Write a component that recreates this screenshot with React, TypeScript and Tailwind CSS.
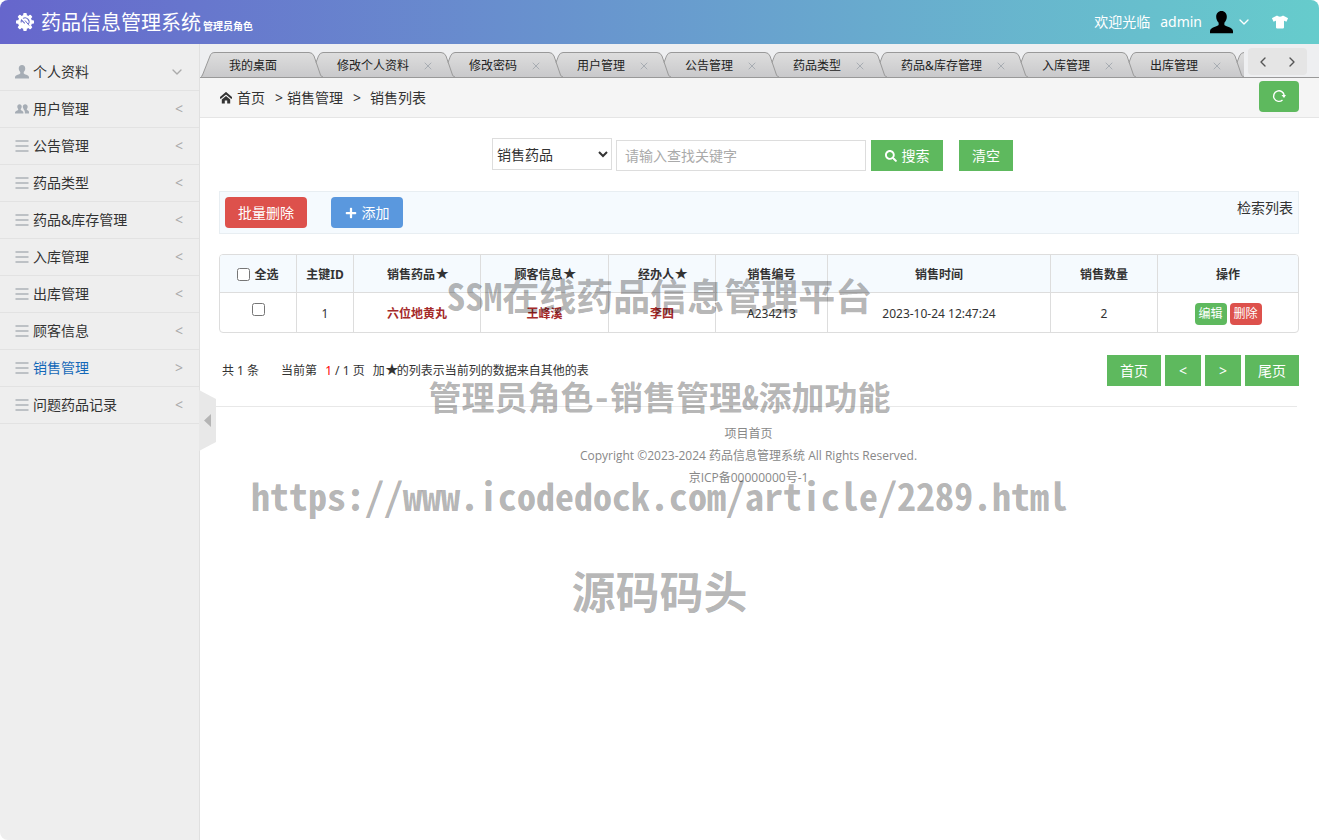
import React from "react";
import { ChevronDown, ChevronLeft, ChevronRight, X } from "lucide-react";
import { FaSearch, FaPlus, FaTshirt } from "react-icons/fa";

type MenuItem = { label: string; icon: "user" | "users" | "list"; state?: "open" | "active" };

const menu: MenuItem[] = [
  { label: "个人资料", icon: "user", state: "open" },
  { label: "用户管理", icon: "users" },
  { label: "公告管理", icon: "list" },
  { label: "药品类型", icon: "list" },
  { label: "药品&库存管理", icon: "list" },
  { label: "入库管理", icon: "list" },
  { label: "出库管理", icon: "list" },
  { label: "顾客信息", icon: "list" },
  { label: "销售管理", icon: "list", state: "active" },
  { label: "问题药品记录", icon: "list" },
];

const tabs = ["我的桌面", "修改个人资料", "修改密码", "用户管理", "公告管理", "药品类型", "药品&库存管理", "入库管理", "出库管理"];

const columns = [
  { label: "主键ID", width: "w-[57px]" },
  { label: "销售药品", width: "w-[127px]", star: true },
  { label: "顾客信息", width: "w-[128px]", star: true },
  { label: "经办人", width: "w-[107px]", star: true },
  { label: "销售编号", width: "w-[112px]" },
  { label: "销售时间", width: "" },
  { label: "销售数量", width: "w-[107px]" },
  { label: "操作", width: "w-[140px]" },
];

const USER_PATH =
  "M8 0C5.700 0 4.300 1.700 4.300 4c0 1.600.700 3.100 1.700 4.100v1.700c-.500.600-1.600.900-3 1.400C1.300 11.800 0 12.700 0 14v1.500h16V14c0-1.300-1.300-2.200-3-2.800-1.400-.500-2.500-.800-3-1.400V8.100c1-1 1.700-2.500 1.700-4.100C11.700 1.700 10.300 0 8 0Z";

function MenuIcon({ kind }: { kind: MenuItem["icon"] }) {
  if (kind === "user") {
    return (
      <svg className="size-3.5 shrink-0 fill-[#a6adb5]" viewBox="0 0 16 16">
        <path d={USER_PATH} />
      </svg>
    );
  }
  if (kind === "users") {
    return (
      <svg className="size-3.5 shrink-0 fill-[#a6adb5]" viewBox="0 0 16 16">
        <path d="M5.200 2.500C3.600 2.500 2.600 3.700 2.600 5.300c0 1 .400 2 1 2.700v1C2.300 9.800 0 10.300 0 12v1.200h9.600V12c0-1.700-1.800-2.200-3-3V8c.600-.700 1.100-1.700 1.100-2.700C7.700 3.700 6.700 2.500 5.200 2.500Z" />
        <path d="M11.600 2.500c-1.600 0-2.700 1.200-2.700 2.800 0 1 .400 2 1 2.700v.700c.900.700 1.400 1.700 1.400 3.300v1.200H16V11.500c0-1.500-1.400-1.900-2.500-2.600V8c.600-.700 1-1.700 1-2.700 0-1.600-1.300-2.800-2.900-2.800Z" />
      </svg>
    );
  }
  return (
    <svg className="size-3.5 shrink-0" viewBox="0 0 14 14" stroke="#adb3b8" strokeWidth="1.500">
      <path d="M.500 2h13M.500 7h13M.500 12h13" />
    </svg>
  );
}

function GearIcon() {
  return (
    <svg className="size-[18px]" viewBox="0 0 18 18">
      <g fill="#fff">
        <circle cx="9" cy="9" r="7" />
        {[0, 45, 90, 135, 180, 225, 270, 315].map((a) => (
          <rect key={a} x="7.200" y="0" width="3.600" height="4" rx="1" transform={`rotate(${a} 9 9)`} />
        ))}
      </g>
      <path d="M5.200 9.500a4 4 0 0 1 .300-2.500l3.300 3.300M7 5.400a4 4 0 0 1 5.400 5.600" fill="none" stroke="#6a6ecb" strokeWidth="1.100" />
      <path d="m9 7.500 4.200 5" stroke="#6a6ecb" strokeWidth="1" />
    </svg>
  );
}

function TabStart() {
  return (
    <svg className="h-[25px] w-3.5 shrink-0" viewBox="0 0 14 25">
      <path d="M0 0H14V.500C11 .500 10 1.500 9 4L1.500 23Q1 24.500 0 25Z" fill="#eeeff1" />
      <path d="M14 .500C11 .500 10 1.500 9 4L1.500 23Q1 24.500 0 24.500" fill="none" stroke="#999" />
    </svg>
  );
}

function TabJoin() {
  return (
    <svg className="h-[25px] w-3.5 shrink-0" viewBox="0 0 14 25">
      <path d="M0 0H14V.500Q11 .500 10 4L7 10 5 4Q3.500 .500 0 .500Z" fill="#eeeff1" />
      <path d="M0 .500Q3.500 .500 5 4L11.500 23Q12 24.500 14 25M7 10.500 9.500 4Q11 .500 14 .500" fill="none" stroke="#999" />
    </svg>
  );
}

function Star() {
  return <span className="inline-block w-3 text-center font-['DejaVu_Sans'] text-base leading-3">★</span>;
}

function Header() {
  return (
    <header className="flex h-11 items-center bg-linear-to-r from-[#6666cc] to-[#66cccc] pr-[31px] pl-4 text-white">
      <GearIcon />
      <h1 className="mt-0.5 ml-[7px] text-[20px] leading-7">药品信息管理系统</h1>
      <span className="mt-2 ml-0.5 text-[10px] leading-4 font-bold">管理员角色</span>
      <div className="ml-auto flex items-center text-sm">
        <span>欢迎光临</span>
        <button className="ml-2.5 flex items-center">
          admin
          <svg className="ml-2 size-[23px] fill-black" viewBox="0 0 16 16">
            <path d={USER_PATH} />
          </svg>
          <ChevronDown className="ml-[3px] size-4" />
        </button>
        <button aria-label="换肤" className="ml-5">
          <FaTshirt className="size-4" />
        </button>
      </div>
    </header>
  );
}

function Sidebar() {
  return (
    <nav className="relative w-[200px] shrink-0 border-r border-[#e0e0e0] bg-[#eee] pt-2.5">
      <ul>
        {menu.map((m) => (
          <li key={m.label} className="border-b border-[#e2e2e2]">
            <a href="#" className={`flex h-9 items-center gap-1 pr-4 pl-[15px] text-sm ${m.state === "active" ? "text-[#1468b8]" : "text-[#333]"}`}>
              <MenuIcon kind={m.icon} />
              <span>{m.label}</span>
              {m.state === "open" ? (
                <ChevronDown className="ml-auto size-4 -mr-0.5 text-[#aaa]" strokeWidth={2} />
              ) : (
                <span className="ml-auto text-[#aaa]">{m.state === "active" ? ">" : "<"}</span>
              )}
            </a>
          </li>
        ))}
      </ul>
      <button aria-label="收起菜单" className="absolute top-[346px] left-full z-10 h-[61px] w-[17px]">
        <svg className="h-full w-full" viewBox="0 0 17 61">
          <path d="M0 0 17 9V52L0 61Z" fill="#e8e8e8" />
          <path d="M12 24V37L5 30.500Z" fill="#b5b5b5" />
        </svg>
      </button>
    </nav>
  );
}

function TabBar() {
  return (
    <div className="flex h-[34px] border-b border-[#999] bg-[#eeeff1] pt-2">
      <ul className="flex min-w-0 flex-1 overflow-hidden pl-px">
        {tabs.map((t, i) => (
          <li key={t} className="flex shrink-0 bg-linear-to-b from-[#dedede] to-[#c9c9cb]">
            {i === 0 && <TabStart />}
            <div className="flex items-center border-t border-[#999] pt-px pl-3.5">
              <a href="#" className="text-xs text-[#222]">{t}</a>
              <span className="flex w-8 justify-center pl-1.5">
                {i > 0 && <X className="size-3 text-[#a8adb3]" strokeWidth={2} />}
              </span>
            </div>
            <TabJoin />
          </li>
        ))}
      </ul>
      <div className="-mt-1 mr-3 ml-1 flex h-[27px] w-[59px] shrink-0 items-center justify-around rounded bg-[#e5e5e5] text-[#555]">
        <button aria-label="向左"><ChevronLeft className="size-4" /></button>
        <button aria-label="向右"><ChevronRight className="size-4" /></button>
      </div>
    </div>
  );
}

function Breadcrumb() {
  return (
    <div className="flex h-10 items-center border-b border-[#e5e5e5] bg-[#f5f5f5] pr-5 pl-5 text-sm">
      <svg className="mr-1 size-3" viewBox="0 0 12 12">
        <path d="M0 6.300 6 1.200 12 6.300" fill="none" stroke="#333" strokeWidth="2" />
        <path d="M1.800 7.500 6 4 10.200 7.500V11.500H7.200V8.500H4.800V11.500H1.800Z" fill="#333" />
      </svg>
      <a href="#" className="mr-2.5 ml-px">首页</a>
      <span className="mr-1">&gt;</span>
      <span>销售管理</span>
      <span className="mr-[9px] ml-2.5">&gt;</span>
      <span>销售列表</span>
      <button aria-label="刷新" className="-mt-[3px] ml-auto flex h-[31px] w-10 items-center justify-center rounded bg-[#5eb95e]">
        <svg className="size-3.5" viewBox="0 0 14 14">
          <path d="M10.500 11A5.300 5.300 0 1 1 12.200 6.500" fill="none" stroke="#fff" strokeWidth="1.400" />
          <path d="M9.500 6H14L12 9Z" fill="#fff" />
        </svg>
      </button>
    </div>
  );
}

function SearchForm() {
  return (
    <form className="flex items-start justify-center pr-[13px] text-sm" onSubmit={(e) => e.preventDefault()}>
      <select aria-label="查找字段" className="-mt-0.5 h-8 w-[120px] border border-[#ddd] bg-white">
        <option>销售药品</option>
      </select>
      <input aria-label="查找关键字" placeholder="请输入查找关键字" className="ml-1 h-[31px] w-[250px] border border-[#ddd] px-2 placeholder:text-[#aaa]" />
      <button className="ml-[5px] flex h-[31px] w-[72px] items-center justify-center gap-[5px] bg-[#5eb95e] text-white">
        <FaSearch className="size-3" />
        搜索
      </button>
      <button className="ml-4 h-[31px] w-[54px] bg-[#5eb95e] text-white">清空</button>
    </form>
  );
}

function Toolbar() {
  return (
    <div className="mt-5 flex h-[43px] border border-[#e8eef2] bg-[#f5fafe] p-[5px] text-sm">
      <button className="h-[31px] w-[82px] rounded bg-[#dd514c] text-white">批量删除</button>
      <button className="ml-6 flex h-[31px] w-[72px] items-center justify-center gap-[5px] rounded bg-[#5a98de] text-white">
        <FaPlus className="size-3" />
        添加
      </button>
      <span className="ml-auto leading-[22px]">检索列表</span>
    </div>
  );
}

function SalesTable() {
  return (
    <div className="mt-5 overflow-hidden rounded border border-[#ddd]">
      <table className="w-full table-fixed border-separate border-spacing-0 text-center text-xs">
        <thead>
          <tr className="h-[38px] bg-[#f5fafe]">
            <th className="w-[77px] border-r border-b border-[#ddd] pt-0.5">
              <label className="flex items-center justify-center gap-1">
                <input type="checkbox" className="size-[13px]" />
                全选
              </label>
            </th>
            {columns.map((c) => (
              <th key={c.label} className={`border-r border-b border-[#ddd] pt-0.5 last:border-r-0 ${c.width}`}>
                {c.label}
                {c.star && <Star />}
              </th>
            ))}
          </tr>
        </thead>
        <tbody>
          <tr className="h-[39px] [&>td]:border-r [&>td]:border-[#ddd] [&>td]:pt-0.5 [&>td:last-child]:border-r-0">
            <td><input type="checkbox" aria-label="选择记录 1" className="mb-2 size-[13px] align-middle" /></td>
            <td>1</td>
            <td className="font-bold text-[#a52a2a]">六位地黄丸</td>
            <td className="font-bold text-[#a52a2a]">王峰溪</td>
            <td className="font-bold text-[#a52a2a]">李四</td>
            <td>A234213</td>
            <td>2023-10-24 12:47:24</td>
            <td>2</td>
            <td>
              <div className="flex justify-center gap-[3px] text-white">
                <button className="h-[22px] w-8 rounded bg-[#5eb95e]">编辑</button>
                <button className="h-[22px] w-8 rounded bg-[#dd514c]">删除</button>
              </div>
            </td>
          </tr>
        </tbody>
      </table>
    </div>
  );
}

function Pagination() {
  return (
    <div className="mt-[22px] flex items-center justify-between pl-[3px] text-xs">
      <p className="whitespace-pre">
        共 1 条<span className="ml-[22px]">当前第</span>
        <span className="ml-2 text-[#f00]">1</span> / 1 页<span className="ml-2">加<Star />的列表示当前列的数据来自其他的表</span>
      </p>
      <div className="flex gap-1 text-sm text-white">
        <button className="h-[31px] w-[54px] bg-[#5eb95e]">首页</button>
        <button className="h-[31px] w-9 bg-[#5eb95e]">&lt;</button>
        <button className="h-[31px] w-9 bg-[#5eb95e]">&gt;</button>
        <button className="h-[31px] w-[54px] bg-[#5eb95e]">尾页</button>
      </div>
    </div>
  );
}

function Watermarks() {
  return (
    <div className="pointer-events-none absolute inset-x-0 top-0 z-20 flex flex-col items-center pt-[270px] font-['Noto_Sans_Mono_CJK_SC','DejaVu_Sans_Mono','Noto_Sans_CJK_SC',monospace] leading-[50px] font-bold whitespace-nowrap text-black/30">
      <p className="text-[37px]">SSM在线药品信息管理平台</p>
      <p className="mt-[51px] text-[33px]">管理员角色-销售管理&amp;添加功能</p>
      <p className="mt-[49px] text-[38px]">https://www.icodedock.com/article/2289.html</p>
      <p className="mt-[45px] text-[44px]">源码码头</p>
    </div>
  );
}

export default function App() {
  return (
    <div className="relative flex min-h-screen flex-col overflow-hidden rounded-lg bg-white font-['Noto_Sans','Noto_Sans_CJK_SC',sans-serif] text-[#333]">
      <Header />
      <div className="flex flex-1">
        <Sidebar />
        <main className="min-w-0 flex-1">
          <TabBar />
          <Breadcrumb />
          <div className="px-5 pt-[22px] pl-[19px]">
            <SearchForm />
            <Toolbar />
            <SalesTable />
            <Pagination />
          </div>
          <footer className="mt-5 mr-[22px] border-t border-[#e8e8e8] pt-4 text-center font-['Open_Sans','Noto_Sans_CJK_SC',sans-serif] text-xs leading-[22px] text-[#888]">
            <p><a href="#">项目首页</a></p>
            <p>Copyright ©2023-2024 药品信息管理系统 All Rights Reserved.</p>
            <p>京ICP备00000000号-1</p>
          </footer>
        </main>
      </div>
      <Watermarks />
    </div>
  );
}
